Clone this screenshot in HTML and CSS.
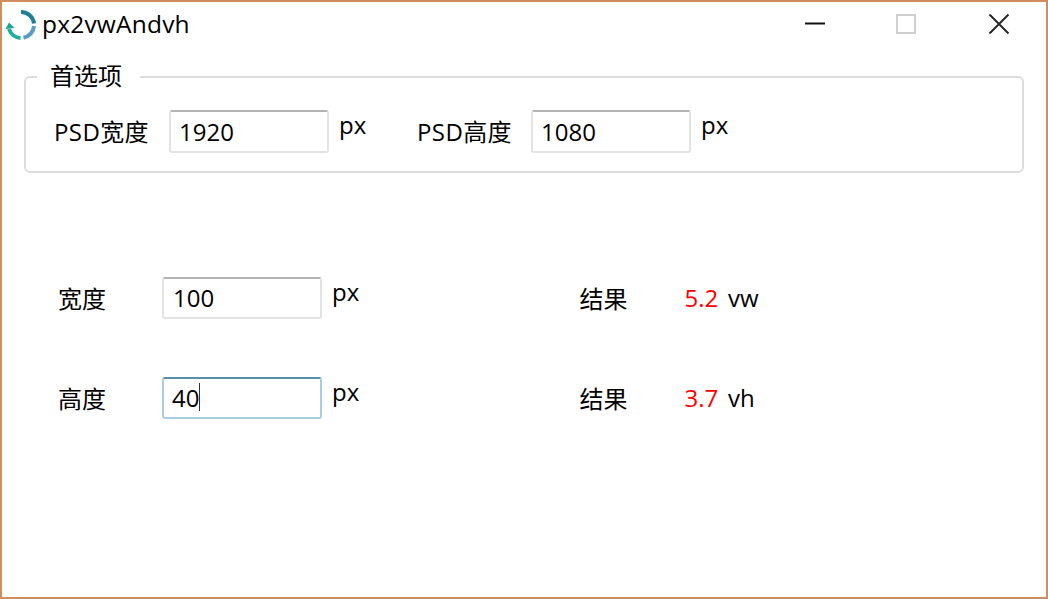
FILE: index.html
```html
<!DOCTYPE html>
<html lang="zh-CN">
<head>
<meta charset="utf-8">
<title>px2vwAndvh</title>
<link rel="stylesheet" href="styles.css">
</head>
<body>
<div class="window">
  <header class="titlebar">
    <svg class="logo" width="32" height="32" viewBox="0 0 32 32" fill="none" stroke-width="4">
      <path d="M16 3 A13 13 0 0 1 29 14.5" stroke="#1f7f97"/>
      <path d="M29 17 A13 13 0 0 1 18.5 28.8" stroke="#5b9bc4"/>
      <path d="M15.5 29 A13 13 0 0 1 4 20" stroke="#1fb09a"/>
      <path d="M0.5 20 L4 13.5 L9.5 19 Z" fill="#1fa58f" stroke="none"/>
    </svg>
    <span class="app-name">px2vwAndvh</span>
    <div class="controls">
      <svg class="ctl" width="22" height="22" viewBox="0 0 22 22"><path d="M1 10.5H21" stroke="#111" stroke-width="2"/></svg>
      <svg class="ctl" width="20" height="20" viewBox="0 0 20 20"><rect x="1" y="1" width="18" height="18" fill="none" stroke="#cfcfcf" stroke-width="2"/></svg>
      <svg class="ctl" width="22" height="22" viewBox="0 0 22 22"><path d="M1.5 1.5L20.5 20.5M20.5 1.5L1.5 20.5" stroke="#222" stroke-width="1.8"/></svg>
    </div>
  </header>

  <fieldset class="prefs">
    <legend class="prefs-title">首选项</legend>
    <div class="prefs-row">
      <span class="prefs-label">PSD宽度</span>
      <input class="field tall" type="text" value="1920">
      <span class="unit">px</span>
      <span class="prefs-label second">PSD高度</span>
      <input class="field tall" type="text" value="1080">
      <span class="unit">px</span>
    </div>
  </fieldset>

  <main class="calc">
    <div class="calc-row">
      <span class="calc-label">宽度</span>
      <input class="field plain" type="text" value="100">
      <span class="unit">px</span>
      <span class="res-label">结果</span>
      <span class="res-value">5.2</span>
      <span class="res-unit">vw</span>
    </div>
    <div class="calc-row">
      <span class="calc-label">高度</span>
      <div class="field focused"><span>40</span><i class="caret"></i></div>
      <span class="unit">px</span>
      <span class="res-label">结果</span>
      <span class="res-value">3.7</span>
      <span class="res-unit">vh</span>
    </div>
  </main>
</div>
</body>
</html>
```
FILE: styles.css
```css
* { box-sizing: border-box; }
html, body { margin: 0; padding: 0; }
body {
  width: 1048px;
  height: 599px;
  overflow: hidden;
  background: #fff;
  color: #000;
  font-family: "Open Sans", "Noto Sans CJK SC", sans-serif;
  font-size: 24px;
}
.window {
  width: 1048px;
  height: 599px;
  border: 2px solid #d08e5e;
  display: flex;
  flex-direction: column;
}
.titlebar {
  height: 45px;
  display: flex;
  align-items: center;
  padding-left: 3px;
  flex: none;
}
.logo { flex: none; margin-right: 5px; }
.app-name { font-size: 24.5px; letter-spacing: 0.2px; line-height: 43px; padding-bottom: 2px; }
.controls {
  margin-left: auto;
  display: flex;
  align-items: center;
  padding-right: 36px;
  padding-bottom: 2px;
  gap: 70px;
}
.ctl:last-child { margin-left: 2px; }
.prefs {
  margin: 15px 22px 0;
  padding: 0 0 0 28px;
  height: 111px;
  border: 2px solid #dcdcdc;
  border-radius: 6px;
  flex: none;
  min-width: 0;
}
.prefs-title {
  margin-left: -17px;
  padding: 0 18px 2px 13px;
  font-size: 24px;
  line-height: 28px;
}
.prefs-row {
  display: flex;
  align-items: center;
  margin-top: 17px;
}
.prefs-label { width: 115px; line-height: 43px; white-space: nowrap; letter-spacing: 0.4px; }
.prefs-label.second { margin-left: 50px; width: 114px; }
.field {
  width: 160px;
  height: 42px;
  flex: none;
  border: 2px solid #e3e3e3;
  border-top-color: #b4b4b4;
  border-radius: 3px;
  padding: 0 8px 2px;
  font: inherit;
  color: #000;
  background: #fff;
  outline: none;
  display: flex;
  align-items: center;
}
.field.tall { height: 43px; padding-bottom: 0; }
.field.plain { padding-left: 9px; }
.field.focused {
  border-color: #a9cde0;
  border-top-color: #5a8cae;
}
.caret { width: 1px; height: 28px; background: #333; }
.unit {
  width: 28px;
  margin-left: 10px;
  padding-bottom: 12px;
  line-height: 32px;
}
.calc {
  margin-top: 104px;
  display: flex;
  flex-direction: column;
  gap: 58px;
  padding-left: 56px;
}
.calc-row { display: flex; align-items: center; height: 42px; }
.calc-label { width: 104px; padding-bottom: 2px; }
.res-label { margin-left: 219.5px; width: 105px; padding-bottom: 2px; }
.res-value { color: #f00; width: 43.5px; padding-bottom: 2px; }
.res-unit { padding-bottom: 2px; }
```
